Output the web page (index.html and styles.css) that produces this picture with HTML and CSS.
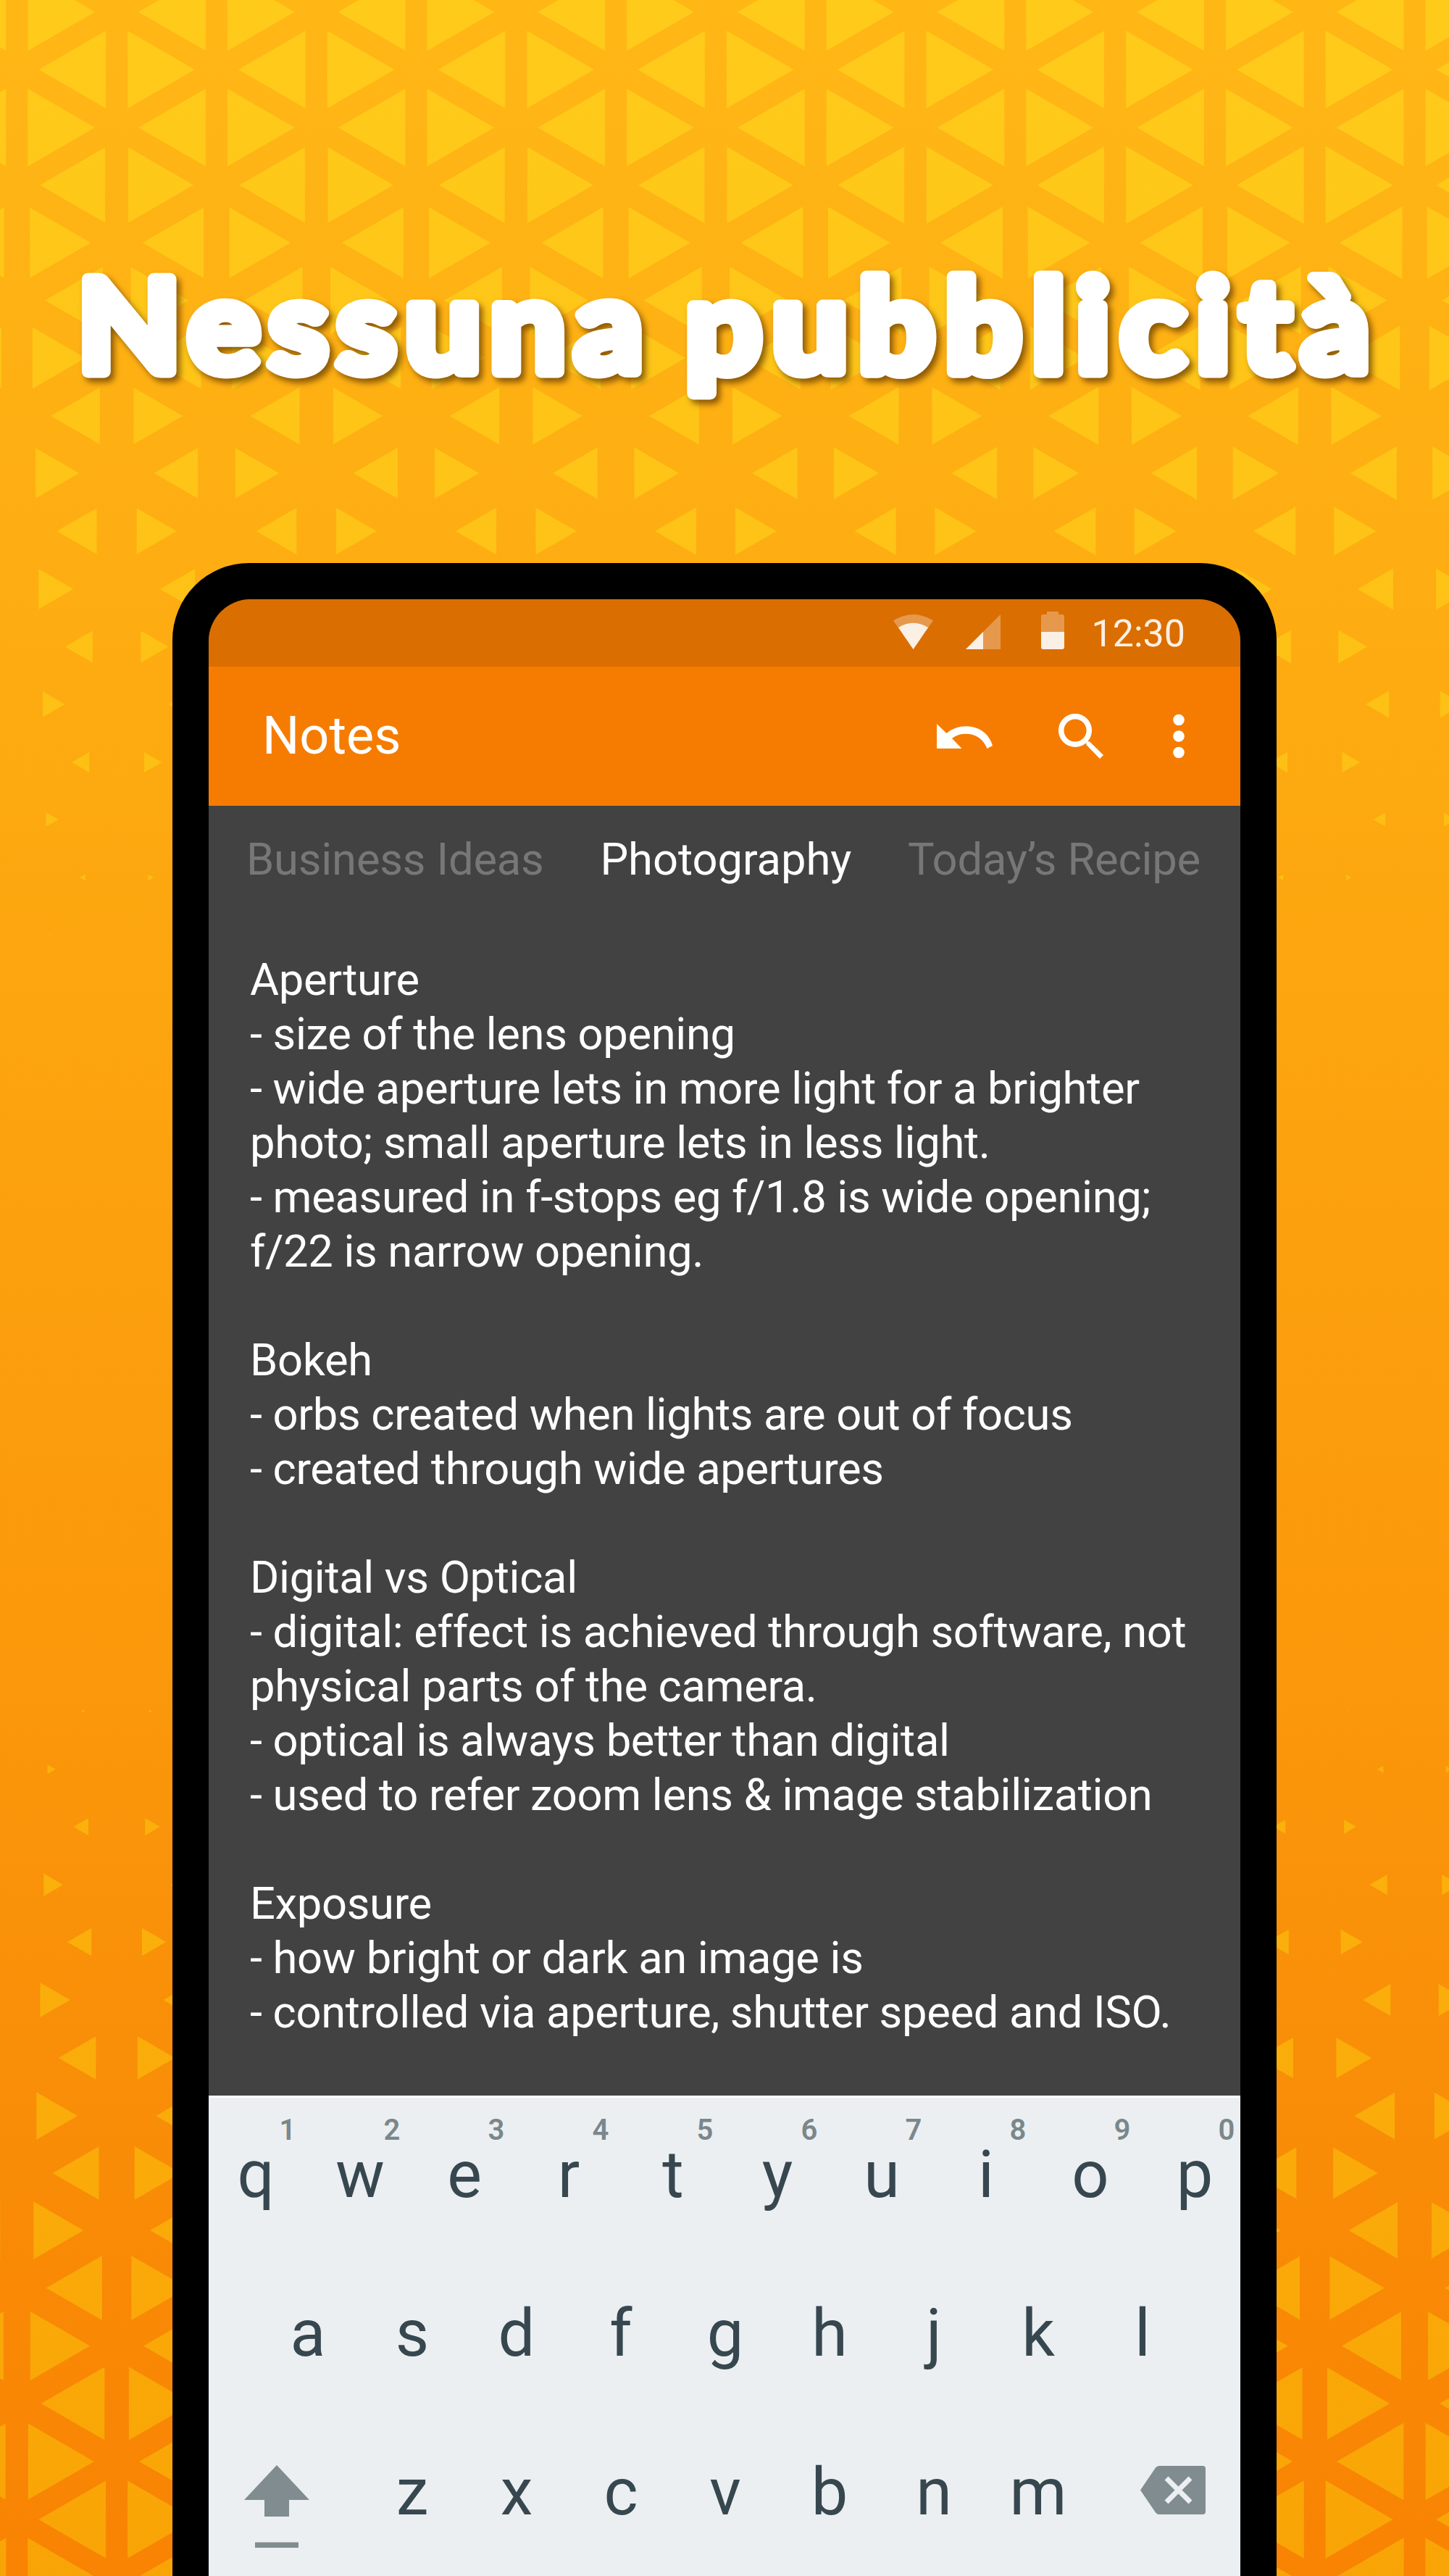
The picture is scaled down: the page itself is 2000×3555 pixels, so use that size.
FILE: index.html
```html
<!DOCTYPE html>
<html lang="it">
<head>
<meta charset="utf-8">
<title>Nessuna pubblicità</title>
<link rel="stylesheet" href="styles.css">
</head>
<body>
<main class="poster">
  <svg class="pattern" viewBox="0 0 2000 3555" aria-hidden="true">
    <defs>
      <linearGradient id="tri" gradientUnits="userSpaceOnUse" x1="0" y1="0" x2="0" y2="3555">
        <stop offset="0" stop-color="#ffcb1b"/>
        <stop offset=".34" stop-color="#fdbe13"/>
        <stop offset=".7" stop-color="#fbb10c"/>
        <stop offset="1" stop-color="#f9a406"/>
      </linearGradient>
    </defs>
    <path id="triangles" fill="url(#tri)"/>
  </svg>

  <h1 class="headline">
    <svg class="headline-art" viewBox="0 0 2000 260">
      <text transform="translate(107 168) scale(1.05 1)" textLength="743" lengthAdjust="spacing">Nessuna</text>
      <text transform="translate(946 168) scale(1.05 1)" textLength="899" lengthAdjust="spacing">pubblicità</text>
    </svg>
  </h1>

  <section class="phone">
    <div class="screen">
      <div class="status">
        <svg class="ic-wifi" width="55" height="48" viewBox="0 0 55 48"><path d="M27.500 48 0 8.500Q27.500-8.500 55 8.500Z" fill="#e6994d"/><path d="M27.500 48 7 18Q27.500 5.500 48 18Z" fill="#fbf0e5"/></svg>
        <svg class="ic-signal" width="48" height="48" viewBox="0 0 48 48"><path d="M0 48 48 0V48Z" fill="#e6994d"/><path d="M0 48 24 24V48Z" fill="#fbf0e5"/></svg>
        <svg class="ic-battery" width="32" height="52" viewBox="0 0 32 52"><path d="M8 0H24V4H29Q32 4 32 7V28H0V7Q0 4 3 4H8Z" fill="#e6994d"/><path d="M0 28H32V49Q32 52 29 52H3Q0 52 0 49Z" fill="#fbf0e5"/></svg>
        <span class="clock">12:30</span>
      </div>
      <header class="appbar">
        <span class="appname">Notes</span>
        <svg class="ic-undo" width="77" height="34" viewBox="0 0 77 34" fill="#fff"><path d="M0 0 13.500 13Q25 3.300 40 3.300C58 3.300 72 13 77 30L69.500 34C64 21 54 13.700 40 13.700Q29 13.700 21 20L34.500 34H0Z"/></svg>
        <svg class="ic-search" width="62" height="62" viewBox="0 0 62 62" fill="none" stroke="#fff"><circle cx="23" cy="23" r="19.300" stroke-width="7.500"/><path d="M38 38 43 38.500 62 57 57 62 38.500 43Z" fill="#fff" stroke="none"/></svg>
        <svg class="ic-more" width="16" height="62" viewBox="0 0 16 62" fill="#fff"><circle cx="8" cy="8.500" r="7.800"/><circle cx="8" cy="31" r="7.800"/><circle cx="8" cy="53.500" r="7.800"/></svg>
      </header>
      <nav class="tabs"><span>Business Ideas</span><span class="active">Photography</span><span>Today’s Recipe</span></nav>
      <div class="note">Aperture
- size of the lens opening
- wide aperture lets in more light for a brighter
photo; small aperture lets in less light.
- measured in f-stops eg f/1.8 is wide opening;
f/22 is narrow opening.

Bokeh
- orbs created when lights are out of focus
- created through wide apertures

Digital vs Optical
- digital: effect is achieved through software, not
physical parts of the camera.
- optical is always better than digital
- used to refer zoom lens &amp; image stabilization

Exposure
- how bright or dark an image is
- controlled via aperture, shutter speed and ISO.</div>
      <div class="keyboard">
        <div class="row top">
          <span class="key">q<sup>1</sup></span><span class="key">w<sup>2</sup></span><span class="key">e<sup>3</sup></span><span class="key">r<sup>4</sup></span><span class="key">t<sup>5</sup></span><span class="key">y<sup>6</sup></span><span class="key">u<sup>7</sup></span><span class="key">i<sup>8</sup></span><span class="key">o<sup>9</sup></span><span class="key">p<sup>0</sup></span>
        </div>
        <div class="row middle">
          <span class="key">a</span><span class="key">s</span><span class="key">d</span><span class="key">f</span><span class="key">g</span><span class="key">h</span><span class="key">j</span><span class="key">k</span><span class="key">l</span>
        </div>
        <div class="row bottom">
          <svg class="ic-shift" width="90" height="114" viewBox="0 0 90 114" fill="#808c90"><path d="M45 0 90 48H62V71H28V48H0Z"/><path d="M15 106.500H75V114H15Z"/></svg>
          <span class="key">z</span><span class="key">x</span><span class="key">c</span><span class="key">v</span><span class="key">b</span><span class="key">n</span><span class="key">m</span>
          <svg class="ic-delete" width="90" height="67" viewBox="0 0 90 67"><path d="M26 0H86Q90 0 90 4V63Q90 67 86 67H26Q23 67 21 64.500L0 33.500 21 2.500Q23 0 26 0Z" fill="#808c90"/><path d="M36 17 69 50M69 17 36 50" stroke="#eceff1" stroke-width="7"/></svg>
        </div>
      </div>
    </div>
  </section>
</main>
<script src="pattern.js"></script>
</body>
</html>
```
FILE: styles.css
```css
* { box-sizing: border-box; }
body { margin: 0; font-family: Roboto, sans-serif; }
.poster {
  position: relative;
  width: 2000px;
  height: 3555px;
  overflow: hidden;
  background: linear-gradient(#ffb716 0, #fda910 1100px, #fb980b 2300px, #f98f08 2800px, #f98303 3555px);
}
.pattern { position: absolute; inset: 0; width: 2000px; height: 3555px; }
.headline { position: relative; margin: 0; padding-top: 345px; height: 777px; }
.headline-art {
  display: block;
  width: 2000px;
  height: 260px;
  overflow: visible;
  filter: drop-shadow(5px 6px 4px rgba(90, 50, 0, .7));
}
.headline-art text {
  font: 700 176px Lato, sans-serif;
  fill: #fff;
  stroke: #fff;
  stroke-width: 17px;
  stroke-linejoin: round;
}
.phone {
  position: relative;
  width: 1524px;
  height: 2900px;
  margin-left: 238px;
  padding: 50px;
  background: #000;
  border-radius: 106px 106px 0 0;
}
.screen {
  height: 2800px;
  overflow: hidden;
  border-radius: 58px 58px 0 0;
  background: #424242;
  color: #fff;
}
.status {
  display: flex;
  align-items: flex-end;
  justify-content: flex-end;
  height: 93px;
  padding: 0 76px 18px 0;
  background: #db6e00;
}
.status svg, .appbar svg { flex: none; }
.ic-wifi { margin-bottom: 6px; }
.ic-signal { margin: 0 56px 6px 45px; }
.ic-battery { margin: 0 38px 6px 0; }
.clock { font-size: 52px; line-height: 54px; color: #fbf0e5; }
.appbar {
  display: flex;
  align-items: center;
  height: 192px;
  padding: 0 77px 0 74px;
  background: #f57c00;
}
.appname { flex: 1; margin-top: -2px; font-size: 72px; }
.ic-undo { margin-right: 91px; }
.ic-search { margin-right: 96px; }
.tabs {
  display: flex;
  justify-content: space-between;
  height: 190px;
  padding: 37px 55px 0 52px;
  font-size: 61.5px;
  line-height: 74px;
  letter-spacing: -.2px;
  color: #777;
  white-space: nowrap;
}
.tabs .active { color: #fff; letter-spacing: -.05px; }
.note {
  height: 1590px;
  padding: 13px 0 0 57px;
  font-size: 61.5px;
  line-height: 75px;
  letter-spacing: -.34px;
  white-space: pre;
}
.keyboard { height: 700px; background: #eceff1; border-top: 3px solid #fff; color: #37474f; }
.row { display: flex; height: 219px; padding-top: 57px; }
.key { position: relative; flex: none; width: 144px; text-align: center; font-size: 90px; line-height: 100px; }
.key sup { position: absolute; left: 98px; top: -35px; width: 36px; font-size: 40px; font-weight: 600; line-height: 46px; color: #7a878c; text-align: center; }
.top { margin-left: -7px; }
.middle { padding-left: 65px; }
.bottom { padding-left: 49px; }
.ic-shift { margin: 12px 70px 0 0; flex: none; }
.ic-delete { margin: 13px 0 0 69px; flex: none; }
```
FILE: pattern.js
```js
// Triangle rows: [centre y, scale at the left edge, scale at the right edge, 1 when shifted by half a cell]
const rows = [
  [16.5, .672, .672, 0], [96, .672, .672, 1], [176, .672, .672, 0], [255.4, .65, .675, 1],
  [335, .61, .63, 0], [414.5, .578, .588, 1], [494, .53, .56, 0], [574, .49, .505, 1],
  [653, .435, .465, 0], [733, .398, .425, 1], [813, .35, .358, 0], [892.5, .275, .29, 1],
  [972, .222, .235, 0], [1052, .175, .18, 1], [1131, .125, .12, 0], [1211, .055, .05, 1], [1290, .015, .01, 0],
  [2361.6, .03, .01, 1], [2441.7, .08, .06, 0], [2521, .152, .118, 1], [2601, .194, .177, 0],
  [2680, .244, .215, 1], [2760, .3, .276, 0], [2840, .377, .35, 1], [2920, .411, .404, 0],
  [2999, .464, .445, 1], [3078, .5, .489, 0], [3157.5, .561, .547, 1], [3237.5, .597, .595, 0],
  [3317, .636, .624, 1], [3397, .66, .67, 0], [3477, .672, .675, 1], [3556, .672, .675, 0]
];
const cell = 137.8;
let d = '';
for (const [y, left, right, shift] of rows) {
  for (let x = 23.3 + (shift ? cell : 0) - 2 * cell; x < 2200; x += 2 * cell) {
    const s = left + (right - left) * x / 2000;
    const h = 79.6 * s;
    const base = cell / 3 * (1 - s);
    const tip = base + cell * s;
    for (const k of [-1, 1]) {
      d += `M${x + k * base} ${y - h}L${x + k * tip} ${y}L${x + k * base} ${y + h}Z`;
    }
  }
}
document.getElementById('triangles').setAttribute('d', d);
```
